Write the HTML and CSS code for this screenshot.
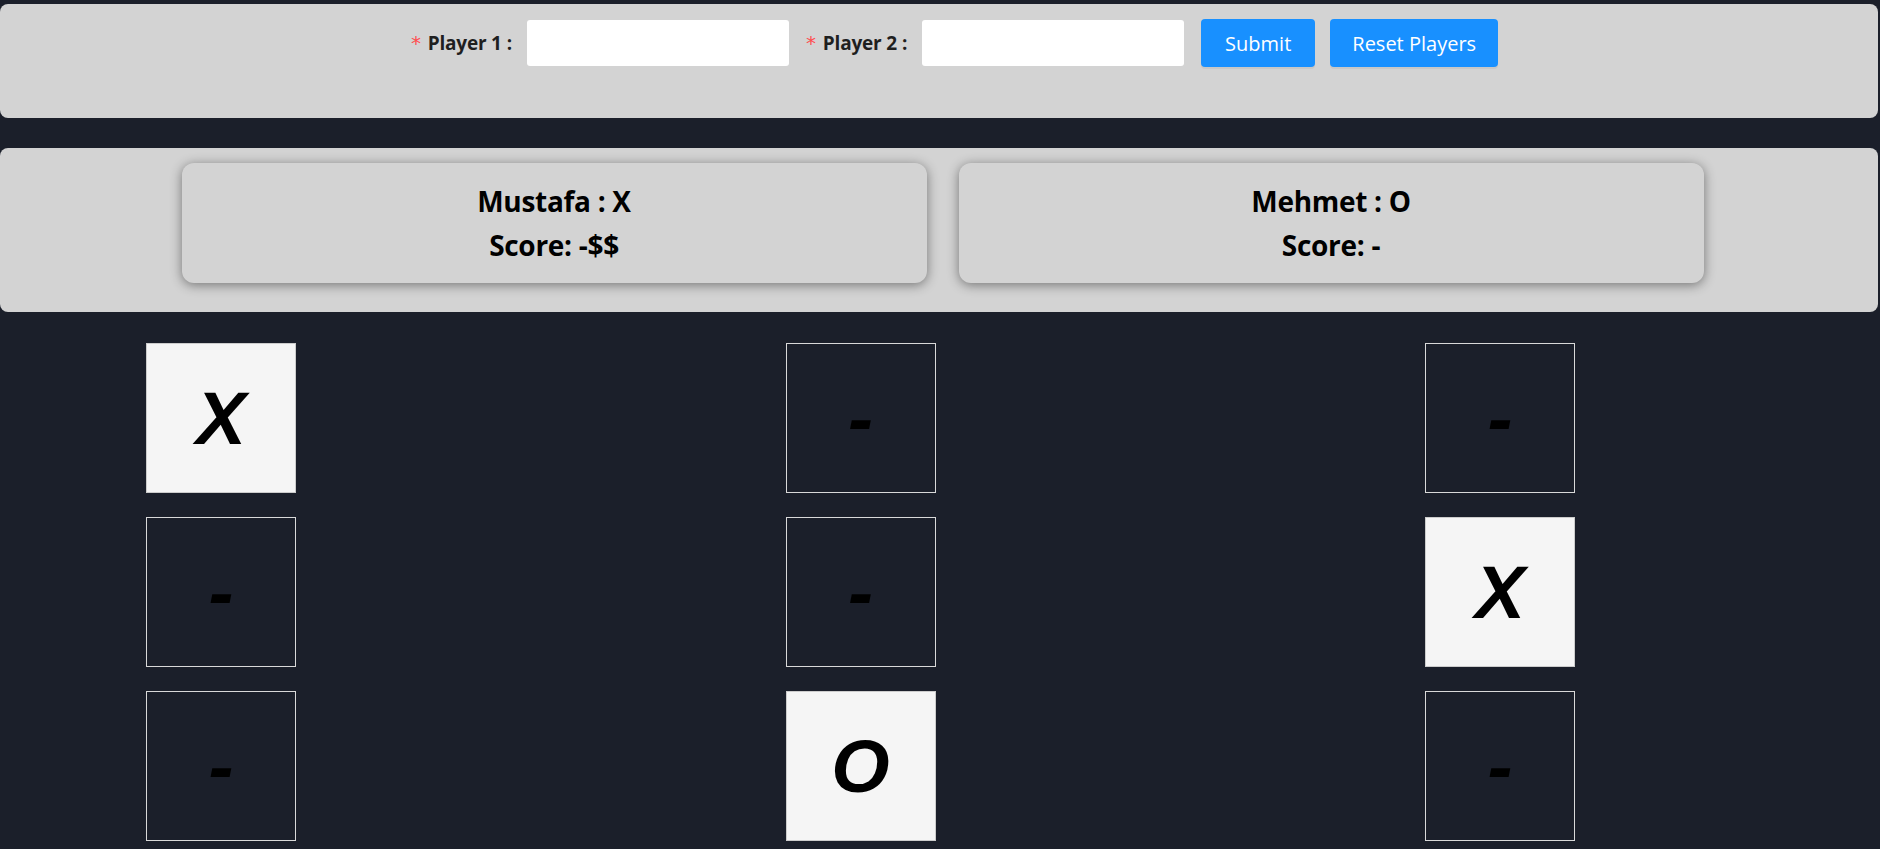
FILE: index.html
```html
<!DOCTYPE html>
<html lang="en">
<head>
<meta charset="utf-8">
<title>Tic Tac Toe</title>
<link rel="stylesheet" href="styles.css">
</head>
<body>
  <header class="panel form-panel">
    <form class="player-form">
      <div class="form-item">
        <label class="form-label"><span class="req">*</span>Player 1<span class="colon">:</span></label>
        <input class="text-input" type="text">
      </div>
      <div class="form-item">
        <label class="form-label"><span class="req">*</span>Player 2<span class="colon">:</span></label>
        <input class="text-input" type="text">
      </div>
      <button type="button" class="btn">Submit</button>
      <button type="button" class="btn btn-wide">Reset Players</button>
    </form>
  </header>

  <section class="panel score-panel">
    <div class="player-card">
      <div class="card-line">Mustafa : X</div>
      <div class="card-line">Score: -$$</div>
    </div>
    <div class="player-card">
      <div class="card-line">Mehmet : O</div>
      <div class="card-line">Score: -</div>
    </div>
  </section>

  <main class="board">
    <div class="cell filled">X</div>
    <div class="cell">-</div>
    <div class="cell">-</div>
    <div class="cell">-</div>
    <div class="cell">-</div>
    <div class="cell filled">X</div>
    <div class="cell">-</div>
    <div class="cell filled">O</div>
    <div class="cell">-</div>
  </main>
</body>
</html>
```
FILE: styles.css
```css
* { box-sizing: border-box; }

html, body {
  margin: 0;
  padding: 0;
  background: #1b1f2a;
  font-family: "Open Sans", "Noto Sans", sans-serif;
  overflow: hidden;
}

.panel {
  background: #d3d3d3;
  border-radius: 8px;
  margin-right: 2px;
}

.form-panel {
  margin-top: 4px;
  height: 114px;
  padding-top: 15px;
}

.player-form {
  display: flex;
  justify-content: center;
  align-items: center;
  padding-left: 46px;
  margin: 0;
}

.form-item {
  display: flex;
  align-items: center;
  margin-right: 17px;
}

.form-label {
  font-weight: 700;
  font-size: 19px;
  color: #1f1f1f;
  margin-right: 15px;
  white-space: nowrap;
  letter-spacing: -0.2px;
}

.req {
  color: #ff4d4f;
  font-weight: 400;
  margin-right: 7px;
  font-family: "DejaVu Sans", sans-serif;
  font-size: 20px;
}

.colon {
  margin-left: 5px;
}

.text-input {
  width: 262px;
  height: 46px;
  border: none;
  border-radius: 3px;
  background: #fff;
  font: inherit;
}

.btn {
  height: 48px;
  padding: 0 24px;
  margin-right: 15px;
  border: none;
  border-radius: 4px;
  background: #1890ff;
  color: #fff;
  font-family: "Open Sans", sans-serif;
  font-size: 20px;
  box-shadow: 0 2px 0 rgba(0, 0, 0, 0.05);
}

.btn-wide {
  padding: 0 22px;
}

.score-panel {
  margin-top: 30px;
  height: 164px;
  padding-top: 15px;
  padding-left: 7px;
  display: flex;
  justify-content: center;
  align-items: flex-start;
  gap: 32px;
}

.player-card {
  width: 745px;
  height: 120px;
  background: #d3d3d3;
  border-radius: 12px;
  box-shadow: 0 2px 12px rgba(0, 0, 0, 0.45);
  display: flex;
  flex-direction: column;
  justify-content: center;
  align-items: center;
}

.card-line {
  font-weight: 700;
  font-size: 28px;
  line-height: 44px;
  color: #000;
  letter-spacing: -0.3px;
}

.board {
  display: grid;
  grid-template-columns: repeat(3, 150px);
  column-gap: 489.5px;
  row-gap: 24px;
  padding-top: 31px;
  padding-left: 146px;
}

.cell {
  width: 150px;
  height: 150px;
  border: 1px solid #d9d9d9;
  display: flex;
  align-items: center;
  justify-content: center;
  font-family: "Liberation Sans", Arial, sans-serif;
  font-weight: 700;
  font-style: italic;
  font-size: 75px;
  color: #000;
  line-height: 1;
}

.cell.filled {
  background: #f5f5f5;
  border-color: #cccccc;
}
```
